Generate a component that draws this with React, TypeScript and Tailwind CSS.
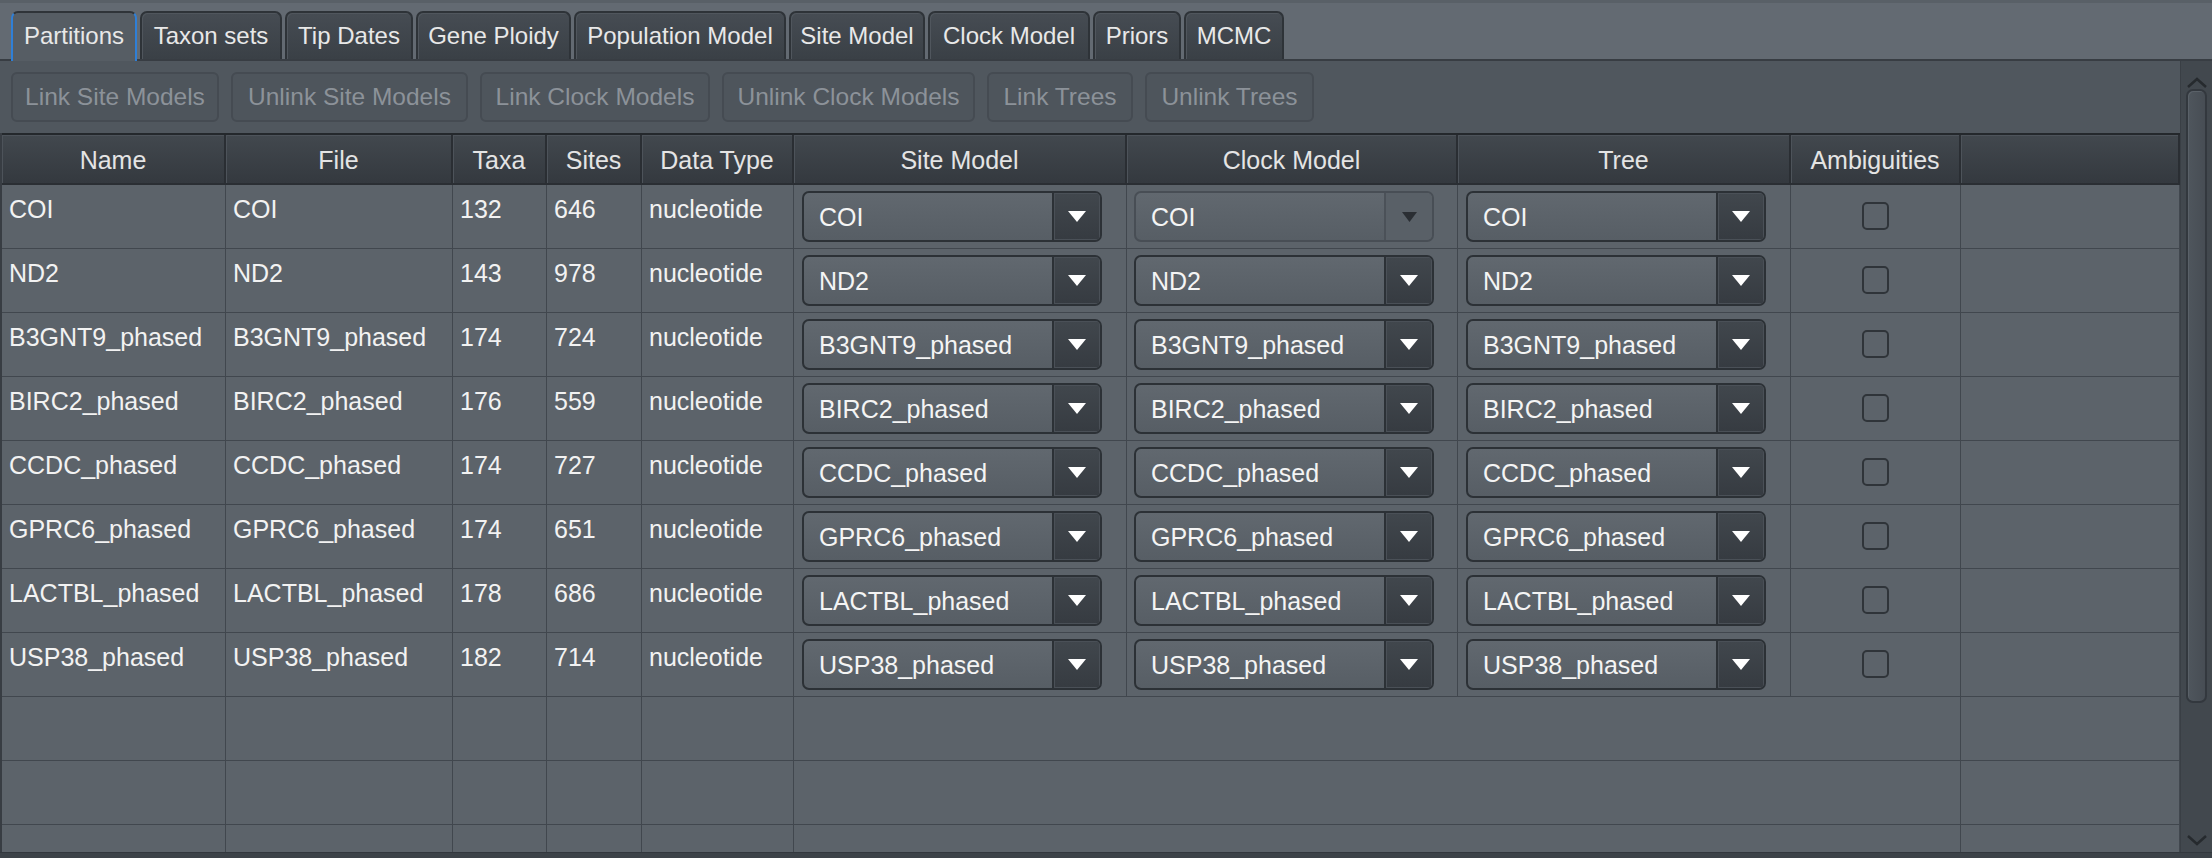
import React from "react";

const tabs: { label: string; w: string; selected?: boolean }[] = [
  { label: "Partitions", w: "w-[126px]", selected: true },
  { label: "Taxon sets", w: "w-[142px]" },
  { label: "Tip Dates", w: "w-[128px]" },
  { label: "Gene Ploidy", w: "w-[155px]" },
  { label: "Population Model", w: "w-[212px]" },
  { label: "Site Model", w: "w-[136px]" },
  { label: "Clock Model", w: "w-[162px]" },
  { label: "Priors", w: "w-[88px]" },
  { label: "MCMC", w: "w-[100px]" },
];

const buttons: { label: string; w: string }[] = [
  { label: "Link Site Models", w: "w-[208px]" },
  { label: "Unlink Site Models", w: "w-[237px]" },
  { label: "Link Clock Models", w: "w-[230px]" },
  { label: "Unlink Clock Models", w: "w-[253px]" },
  { label: "Link Trees", w: "w-[146px]" },
  { label: "Unlink Trees", w: "w-[169px]" },
];

const rows = [
  ["COI", "132", "646"],
  ["ND2", "143", "978"],
  ["B3GNT9_phased", "174", "724"],
  ["BIRC2_phased", "176", "559"],
  ["CCDC_phased", "174", "727"],
  ["GPRC6_phased", "174", "651"],
  ["LACTBL_phased", "178", "686"],
  ["USP38_phased", "182", "714"],
];

const GRID =
  "grid grid-cols-[224px_227px_94px_95px_152px_333px_331px_333px_170px_219px]";

function Combo({ label, alt }: { label: string; alt?: boolean }) {
  return (
    <div
      className={`w-[300px] h-[51px] rounded-[7px] border-2 flex overflow-hidden bg-gradient-to-b from-[#61686f] to-[#575e65] ${
        alt ? "border-[#484e55]" : "border-[#2c3136]"
      }`}
    >
      <div className="flex-1 flex items-center pl-[15px] pt-[2px] text-[25px] text-[#f4f4f4] whitespace-nowrap">
        {label}
      </div>
      <div
        className={`w-[48px] flex items-center justify-center border-l-2 ${
          alt
            ? "border-[#4b5158] bg-[#596067]"
            : "border-[#2c3136] bg-gradient-to-b from-[#41474d] to-[#363b41] shadow-[inset_0_0_0_1px_#4a5057]"
        }`}
      >
        {alt ? (
          <svg width="15" height="10" viewBox="0 0 15 10">
            <path d="M0 0h15L7.5 10z" fill="#2a2e33" />
          </svg>
        ) : (
          <svg width="18" height="11" viewBox="0 0 18 11">
            <path d="M0 0h18L9 11z" fill="#ffffff" />
          </svg>
        )}
      </div>
    </div>
  );
}

const cellCls = "border-r border-[#41474e] overflow-hidden";
const textCell = `${cellCls} pl-[7px] pt-[10px] text-[25px] leading-[29px] text-[#f2f2f2] whitespace-nowrap`;

export default function App() {
  return (
    <div className="w-[2212px] h-[858px] flex flex-col overflow-hidden bg-[#50575e] font-['Liberation_Sans',Arial,sans-serif] select-none">
      {/* Tab bar */}
      <div className="h-[61px] shrink-0 flex items-end gap-[3px] pl-[11px] bg-[#636a72] border-t-[3px] border-t-[#596067] border-b-2 border-b-[#383d43]">
        {tabs.map((t) =>
          t.selected ? (
            <div
              key={t.label}
              className={`${t.w} h-[50px] -mb-[2px] rounded-t-[7px] border-t-2 border-x-2 border-t-[#2f3439] border-x-[#2f7fd6] bg-[#565d64] flex items-center justify-center text-[24px] text-[#e8e8e8] pb-[2px]`}
            >
              {t.label}
            </div>
          ) : (
            <div
              key={t.label}
              className={`${t.w} h-[48px] rounded-t-[7px] border-t-2 border-x-2 border-[#2e3338] bg-gradient-to-b from-[#464c53] to-[#3a4046] shadow-[inset_1px_1px_0_#50565d] flex items-center justify-center text-[24px] text-[#e8e8e8]`}
            >
              {t.label}
            </div>
          )
        )}
      </div>

      {/* Content */}
      <div className="flex-1 flex min-h-0">
        <div className="flex-1 flex flex-col min-w-0 overflow-hidden">
          {/* Buttons */}
          <div className="shrink-0 flex gap-[12px] pl-[11px] pt-[11px]">
            {buttons.map((b) => (
              <div
                key={b.label}
                className={`${b.w} h-[50px] rounded-[6px] border-2 border-[#454b52] bg-[#4e555c] flex items-center justify-center text-[24.5px] text-[#8c9299] whitespace-nowrap`}
              >
                {b.label}
              </div>
            ))}
          </div>

          {/* Table */}
          <div className="mt-[11px] flex-1 min-h-0 overflow-hidden border-l-2 border-[#383d43] bg-[#5c636a]">
            {/* Header */}
            <div
              className={`${GRID} h-[52px] border-t-2 border-t-[#24282c] border-b-2 border-b-[#2a2e33]`}
            >
              {[
                "Name",
                "File",
                "Taxa",
                "Sites",
                "Data Type",
                "Site Model",
                "Clock Model",
                "Tree",
                "Ambiguities",
                "",
              ].map((h, i) => (
                <div
                  key={i}
                  className="border-r-2 border-[#2a2e33] bg-gradient-to-b from-[#42484e] to-[#34393f] shadow-[inset_1px_1px_0_#4d535a] flex items-center justify-center pt-[3px] text-[25px] text-[#e4e4e4] whitespace-nowrap"
                >
                  {h}
                </div>
              ))}
            </div>

            {/* Data rows */}
            {rows.map(([name, taxa, sites], i) => (
              <div
                key={name}
                className={`${GRID} h-[64px] border-b border-[#41474e]`}
              >
                <div className={textCell}>{name}</div>
                <div className={textCell}>{name}</div>
                <div className={textCell}>{taxa}</div>
                <div className={textCell}>{sites}</div>
                <div className={textCell}>nucleotide</div>
                <div className={`${cellCls} pl-[8px] pt-[6px]`}>
                  <Combo label={name} />
                </div>
                <div className={`${cellCls} pl-[7px] pt-[6px]`}>
                  <Combo label={name} alt={i === 0} />
                </div>
                <div className={`${cellCls} pl-[8px] pt-[6px]`}>
                  <Combo label={name} />
                </div>
                <div className={`${cellCls} flex justify-center pt-[17px]`}>
                  <div className="w-[27px] h-[28px] rounded-[5px] border-2 border-[#2f3439]" />
                </div>
                <div className={cellCls} />
              </div>
            ))}

            {/* Empty rows */}
            {[0, 1, 2].map((k) => (
              <div
                key={k}
                className={`${GRID} h-[64px] border-b border-[#41474e]`}
              >
                <div className={cellCls} />
                <div className={cellCls} />
                <div className={cellCls} />
                <div className={cellCls} />
                <div className={cellCls} />
                <div className={`${cellCls} col-span-4`} />
                <div className={cellCls} />
              </div>
            ))}
          </div>
        </div>

        {/* Vertical scrollbar */}
        <div className="w-[32px] shrink-0 bg-[#42484e] border-l border-[#3a3f45] flex flex-col items-center">
          <div className="h-[27px] flex items-end justify-center">
            <svg width="20" height="11" viewBox="0 0 20 11">
              <path d="M1 10L10 2l9 8" stroke="#262a2e" strokeWidth="2.5" fill="none" />
            </svg>
          </div>
          <div className="mt-[1px] w-[21px] h-[614px] rounded-[7px] border-2 border-[#33383e] bg-gradient-to-r from-[#4f565d] to-[#474d54] shadow-[inset_1px_1px_0_#5a6168]" />
          <div className="flex-1 flex items-end justify-center pb-[6px]">
            <svg width="20" height="11" viewBox="0 0 20 11">
              <path d="M1 1l9 8 9-8" stroke="#262a2e" strokeWidth="2.5" fill="none" />
            </svg>
          </div>
        </div>
      </div>

      {/* Bottom strip (horizontal scrollbar edge) */}
      <div className="h-[6px] shrink-0 bg-[#3c4248] border-t border-[#33383e]" />
    </div>
  );
}
